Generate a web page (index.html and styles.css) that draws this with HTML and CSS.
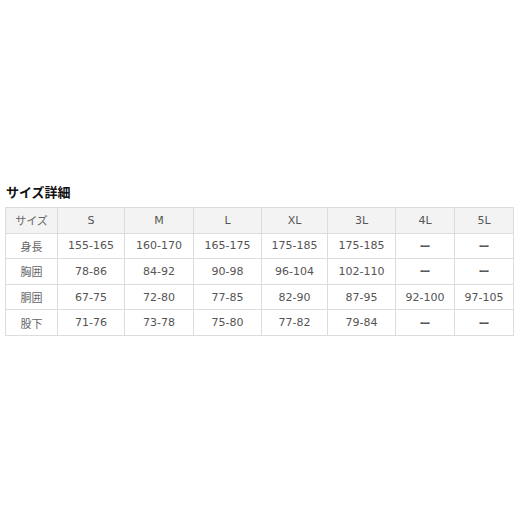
FILE: index.html
```html
<!DOCTYPE html>
<html lang="ja">
<head>
<meta charset="utf-8">
<link rel="stylesheet" href="styles.css">
</head>
<body>
<div class="page">
  <h2 class="title">サイズ詳細</h2>
  <table class="size-table">
    <colgroup>
      <col class="c0"><col class="c1"><col class="c2"><col class="c3"><col class="c4"><col class="c5"><col class="c6"><col class="c7">
    </colgroup>
    <tr class="head"><td class="jp">サイズ</td><td>S</td><td>M</td><td>L</td><td>XL</td><td>3L</td><td>4L</td><td>5L</td></tr>
    <tr><td class="jp">身長</td><td>155-165</td><td>160-170</td><td>165-175</td><td>175-185</td><td>175-185</td><td class="dash">ー</td><td class="dash">ー</td></tr>
    <tr><td class="jp">胸囲</td><td>78-86</td><td>84-92</td><td>90-98</td><td>96-104</td><td>102-110</td><td class="dash">ー</td><td class="dash">ー</td></tr>
    <tr><td class="jp">胴囲</td><td>67-75</td><td>72-80</td><td>77-85</td><td>82-90</td><td>87-95</td><td>92-100</td><td>97-105</td></tr>
    <tr><td class="jp">股下</td><td>71-76</td><td>73-78</td><td>75-80</td><td>77-82</td><td>79-84</td><td class="dash">ー</td><td class="dash">ー</td></tr>
  </table>
</div>
</body>
</html>
```
FILE: styles.css
```css
html, body {
  margin: 0;
  padding: 0;
  background: #ffffff;
}
.page {
  padding: 182px 7px 0 5px;
}
.title {
  margin: 0 0 5px 1px;
  height: 20px;
  line-height: 20px;
  font-family: "Noto Sans CJK JP", sans-serif;
  font-size: 13px;
  font-weight: 700;
  color: #111;
}
.size-table {
  border-collapse: collapse;
  table-layout: fixed;
  width: 508px;
  font-family: "DejaVu Sans", Verdana, sans-serif;
  font-size: 11px;
  color: #555;
}
.c0 { width: 52px; }
.c1 { width: 67px; }
.c2 { width: 69px; }
.c3 { width: 68px; }
.c4 { width: 66px; }
.c5 { width: 68px; }
.c6 { width: 59px; }
.c7 { width: 59px; }
.size-table td {
  border: 1px solid #dcdcdc;
  height: 24.6px;
  padding: 0;
  text-align: center;
  vertical-align: middle;
}
.size-table .head td {
  background: #f3f3f3;
}
.size-table .jp {
  font-family: "Noto Sans CJK JP", sans-serif;
  font-size: 11px;
  color: #666;
}
.size-table .dash {
  font-family: "Noto Sans CJK JP", sans-serif;
  font-size: 11px;
  font-weight: 700;
  color: #555;
}
```
